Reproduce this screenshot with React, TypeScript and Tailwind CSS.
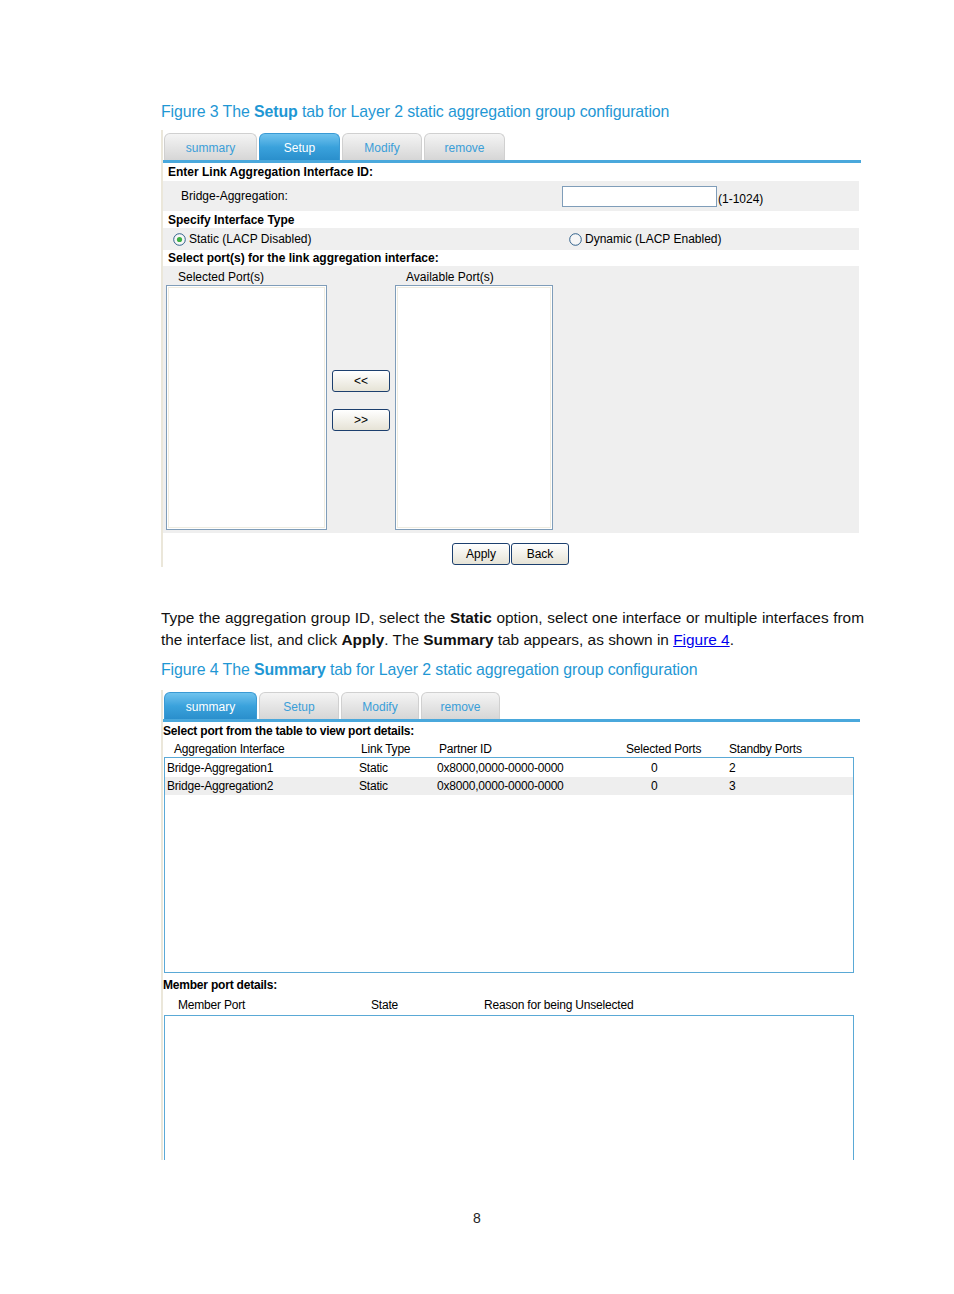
import React from 'react';

const ui = { fontFamily: '"Liberation Sans", Arial, sans-serif' };
const doc = { fontFamily: '"Liberation Sans", Arial, sans-serif' };

function Tab({ label, active, w }: { label: string; active?: boolean; w: string }) {
  return (
    <div
      className={
        'h-[27px] rounded-t-[6px] flex items-end justify-center pb-[3px] text-[12px] border border-b-0 ' +
        w +
        ' ' +
        (active
          ? 'bg-gradient-to-b from-[#6fc3ee] via-[#3aa2dc] to-[#2a8fcc] text-white border-[#3a9ad4]'
          : 'bg-gradient-to-b from-[#f4f4f4] to-[#d6d6d6] text-[#3a9ed8] border-[#d0d0d0]')
      }
    >
      {label}
    </div>
  );
}

function Radio({ checked }: { checked?: boolean }) {
  return (
    <svg width="13" height="13" viewBox="0 0 13 13" className="shrink-0">
      <circle cx="6.5" cy="6.5" r="5.8" fill="#f6f6f6" stroke="#1c5180" strokeWidth="0.9" />
      {checked && <circle cx="6.5" cy="6.5" r="2.6" fill="#3cb043" />}
    </svg>
  );
}

function Btn({ children, w }: { children: React.ReactNode; w: string }) {
  return (
    <div
      className={
        'h-[22px] rounded-[3px] border border-[#1c3f6e] bg-gradient-to-b from-white to-[#e6e3d6] flex items-center justify-center text-[12px] text-black ' +
        w
      }
    >
      {children}
    </div>
  );
}

function ListBox({ w }: { w: string }) {
  return (
    <div className={'h-[245px] border border-[#7f9db9] bg-white p-[1px] ' + w}>
      <div className="h-full w-full border border-[#efece0]" />
    </div>
  );
}

function Caption({ n, bold, rest }: { n: string; bold: string; rest: string }) {
  return (
    <div className="text-[15.9px] leading-[18px] text-[#1f97d4] tracking-[-0.1px]" style={doc}>
      Figure {n} The <span className="font-bold">{bold}</span> {rest}
    </div>
  );
}

function SetupShot() {
  return (
    <div className="w-[700px] border-l-2 border-[#ebe7da] pt-[3px] text-black" style={ui}>
      <div className="flex gap-[2px] pl-[1px]">
        <Tab label="summary" w="w-[93px]" />
        <Tab label="Setup" active w="w-[81px]" />
        <Tab label="Modify" w="w-[80px]" />
        <Tab label="remove" w="w-[81px]" />
      </div>
      <div className="h-[3px] bg-[#4aa8dc]" />
      <div className="w-[696px] text-[12px]">
        <div className="h-[18px] flex items-center pl-[5px] font-bold">Enter Link Aggregation Interface ID:</div>
        <div className="h-[30px] bg-[#efefef] flex items-center">
          <div className="w-[399px] pl-[18px]">Bridge-Aggregation:</div>
          <div className="w-[155px] h-[21px] border border-[#7f9db9] bg-white" />
          <div className="pl-[1px] pt-[5px]">(1-1024)</div>
        </div>
        <div className="h-[17px] flex items-center pl-[5px] font-bold">Specify Interface Type</div>
        <div className="h-[22px] bg-[#efefef] flex items-center">
          <div className="w-[406px] pl-[10px] flex items-center gap-[3px]">
            <Radio checked />
            <span>Static (LACP Disabled)</span>
          </div>
          <div className="flex items-center gap-[3px]">
            <Radio />
            <span>Dynamic (LACP Enabled)</span>
          </div>
        </div>
        <div className="h-[16px] flex items-center pl-[5px] font-bold">Select port(s) for the link aggregation interface:</div>
        <div className="h-[267px] bg-[#efefef] flex pl-[3px] pt-[3px]">
          <div className="flex flex-col">
            <div className="h-[16px] pl-[12px] leading-[16px]">Selected Port(s)</div>
            <ListBox w="w-[161px]" />
          </div>
          <div className="flex flex-col gap-[17px] pt-[101px] px-[5px]">
            <Btn w="w-[58px]">&lt;&lt;</Btn>
            <Btn w="w-[58px]">&gt;&gt;</Btn>
          </div>
          <div className="flex flex-col">
            <div className="h-[16px] pl-[11px] leading-[16px]">Available Port(s)</div>
            <ListBox w="w-[158px]" />
          </div>
        </div>
        <div className="h-[34px] flex items-start pt-[10px] pl-[289px] gap-[1px]">
          <Btn w="w-[58px]">Apply</Btn>
          <Btn w="w-[58px]">Back</Btn>
        </div>
      </div>
    </div>
  );
}

const aggRows = [
  { name: 'Bridge-Aggregation1', type: 'Static', partner: '0x8000,0000-0000-0000', sel: '0', stby: '2' },
  { name: 'Bridge-Aggregation2', type: 'Static', partner: '0x8000,0000-0000-0000', sel: '0', stby: '3' },
];

function SummaryShot() {
  return (
    <div className="w-[700px] border-l-2 border-[#ebe7da] pt-[2px] text-black" style={ui}>
      <div className="flex gap-[2px] pl-[1px]">
        <Tab label="summary" active w="w-[93px]" />
        <Tab label="Setup" w="w-[80px]" />
        <Tab label="Modify" w="w-[78px]" />
        <Tab label="remove" w="w-[79px]" />
      </div>
      <div className="h-[3px] bg-[#4aa8dc] w-[697px]" />
      <div className="text-[12px] tracking-[-0.2px]">
        <div className="h-[18px] flex items-end font-bold">Select port from the table to view port details:</div>
        <div className="h-[17px] flex items-center">
          <div className="w-[198px] pl-[11px]">Aggregation Interface</div>
          <div className="w-[78px]">Link Type</div>
          <div className="w-[187px]">Partner ID</div>
          <div className="w-[103px]">Selected Ports</div>
          <div>Standby Ports</div>
        </div>
        <div className="ml-[1px] w-[690px] h-[216px] border border-[#5aa9d6] pt-[1px]">
          {aggRows.map((r, i) => (
            <div key={r.name} className={'h-[18px] flex items-center ' + (i % 2 ? 'bg-[#eeeeee]' : 'bg-white')}>
              <div className="w-[194px] pl-[2px]">{r.name}</div>
              <div className="w-[78px]">{r.type}</div>
              <div className="w-[192px]">{r.partner}</div>
              <div className="w-[100px] pl-[22px]">{r.sel}</div>
              <div>{r.stby}</div>
            </div>
          ))}
        </div>
        <div className="h-[21px] flex items-end font-bold">Member port details:</div>
        <div className="h-[21px] flex items-center">
          <div className="w-[208px] pl-[15px]">Member Port</div>
          <div className="w-[113px]">State</div>
          <div>Reason for being Unselected</div>
        </div>
        <div className="ml-[1px] w-[690px] h-[145px] border border-b-0 border-[#5aa9d6]" />
      </div>
    </div>
  );
}

export default function App() {
  return (
    <div className="w-[954px] h-[1294px] bg-white relative" style={doc}>
      <div className="pl-[161px] pt-[103px]">
        <Caption n="3" bold="Setup" rest="tab for Layer 2 static aggregation group configuration" />
        <div className="mt-[9px]">
          <SetupShot />
        </div>
        <div className="mt-[40px] w-[703px] text-[15.4px] leading-[22px] text-[#111]" style={doc}>
          <div className="text-justify [text-align-last:justify]">
            Type the aggregation group ID, select the <b>Static</b> option, select one interface or multiple interfaces from
          </div>
          <div>
            the interface list, and click <b>Apply</b>. The <b>Summary</b> tab appears, as shown in{' '}
            <span className="text-[#0000ee] underline">Figure 4</span>.
          </div>
        </div>
        <div className="mt-[10px]">
          <Caption n="4" bold="Summary" rest="tab for Layer 2 static aggregation group configuration" />
        </div>
        <div className="mt-[11px]">
          <SummaryShot />
        </div>
      </div>
      <div className="absolute top-[1208px] left-0 w-[954px] text-center text-[14px] text-[#222]">8</div>
    </div>
  );
}
